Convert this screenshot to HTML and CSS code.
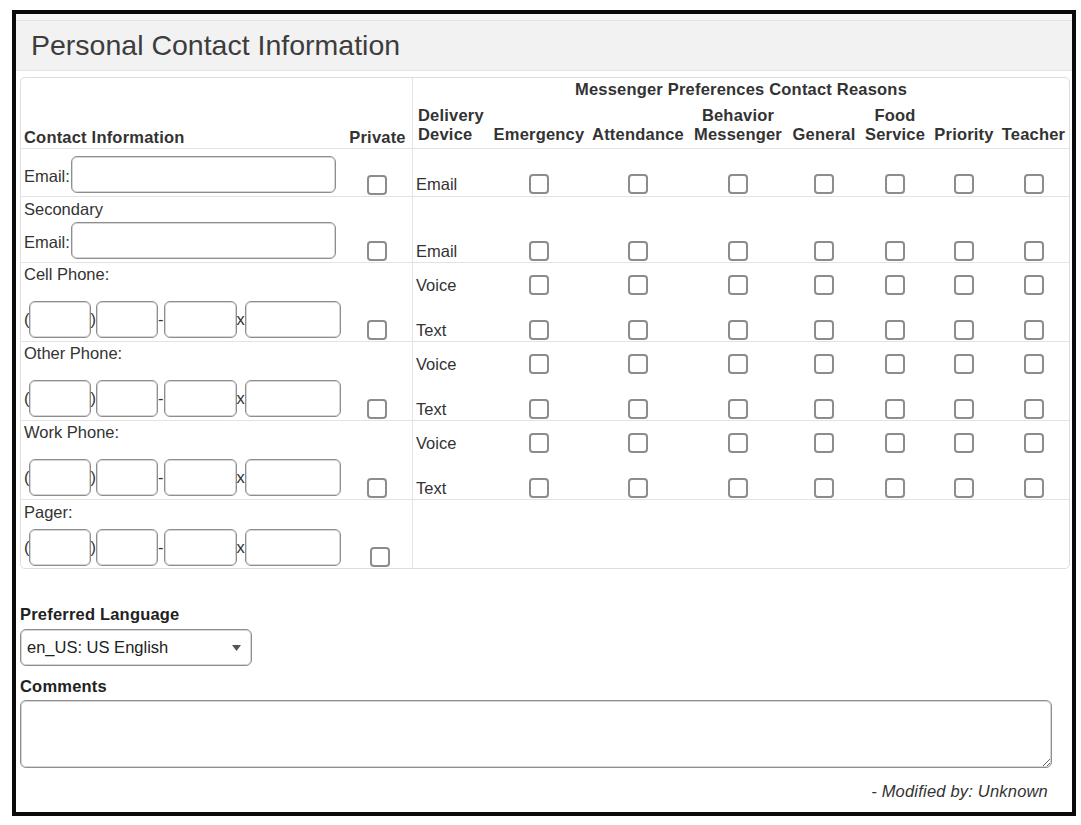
FILE: index.html
```html
<!DOCTYPE html>
<html lang="en">
<head>
<meta charset="utf-8">
<title>Personal Contact Information</title>
<link rel="stylesheet" href="styles.css">
</head>
<body>
<div class="frame">
  <div class="hdr"><h2 class="title">Personal Contact Information</h2></div>
  <div class="body">
    <div class="grid">
      <!-- header -->
      <div class="c th hd-left span2r">Contact Information</div>
      <div class="c th hd-priv span2r">Private</div>
      <div class="c th hd-msg dl">Messenger Preferences Contact Reasons</div>
      <div class="c th hd-dev dl">Delivery<br>Device</div>
      <div class="c th hd-col">Emergency</div>
      <div class="c th hd-col">Attendance</div>
      <div class="c th hd-col">Behavior<br>Messenger</div>
      <div class="c th hd-col">General</div>
      <div class="c th hd-col">Food<br>Service</div>
      <div class="c th hd-col">Priority</div>
      <div class="c th hd-col">Teacher</div>

      <!-- Email -->
      <div class="c t left">
        <div class="field"><span class="flbl">Email:</span><input class="in in-email" type="text"></div>
      </div>
      <div class="c t ck priv"><input class="cb" type="checkbox"></div>
      <div class="c t dl dv pb2">Email</div>
      <div class="c t ck pb2"><input class="cb" type="checkbox"></div>
      <div class="c t ck pb2"><input class="cb" type="checkbox"></div>
      <div class="c t ck pb2"><input class="cb" type="checkbox"></div>
      <div class="c t ck pb2"><input class="cb" type="checkbox"></div>
      <div class="c t ck pb2"><input class="cb" type="checkbox"></div>
      <div class="c t ck pb2"><input class="cb" type="checkbox"></div>
      <div class="c t ck pb2"><input class="cb" type="checkbox"></div>

      <!-- Secondary Email -->
      <div class="c t left stack sec">
        <div>Secondary</div>
        <div class="field"><span class="flbl">Email:</span><input class="in in-email" type="text"></div>
      </div>
      <div class="c t ck priv"><input class="cb" type="checkbox"></div>
      <div class="c t dl dv">Email</div>
      <div class="c t ck"><input class="cb" type="checkbox"></div>
      <div class="c t ck"><input class="cb" type="checkbox"></div>
      <div class="c t ck"><input class="cb" type="checkbox"></div>
      <div class="c t ck"><input class="cb" type="checkbox"></div>
      <div class="c t ck"><input class="cb" type="checkbox"></div>
      <div class="c t ck"><input class="cb" type="checkbox"></div>
      <div class="c t ck"><input class="cb" type="checkbox"></div>

      <!-- Cell Phone -->
      <div class="c t left stack phone span2r">
        <div>Cell Phone:</div>
        <div class="field ph"><span class="op">(</span><input class="in p1" type="text"><span>)</span><input class="in p2" type="text"><span>-</span><input class="in p3" type="text"><span>x</span><input class="in p4" type="text"></div>
      </div>
      <div class="c t ck priv span2r"><input class="cb" type="checkbox"></div>
      <div class="c t dl dv">Voice</div>
      <div class="c t ck"><input class="cb" type="checkbox"></div>
      <div class="c t ck"><input class="cb" type="checkbox"></div>
      <div class="c t ck"><input class="cb" type="checkbox"></div>
      <div class="c t ck"><input class="cb" type="checkbox"></div>
      <div class="c t ck"><input class="cb" type="checkbox"></div>
      <div class="c t ck"><input class="cb" type="checkbox"></div>
      <div class="c t ck"><input class="cb" type="checkbox"></div>
      <div class="c dl dv">Text</div>
      <div class="c ck"><input class="cb" type="checkbox"></div>
      <div class="c ck"><input class="cb" type="checkbox"></div>
      <div class="c ck"><input class="cb" type="checkbox"></div>
      <div class="c ck"><input class="cb" type="checkbox"></div>
      <div class="c ck"><input class="cb" type="checkbox"></div>
      <div class="c ck"><input class="cb" type="checkbox"></div>
      <div class="c ck"><input class="cb" type="checkbox"></div>

      <!-- Other Phone -->
      <div class="c t left stack phone span2r">
        <div>Other Phone:</div>
        <div class="field ph"><span class="op">(</span><input class="in p1" type="text"><span>)</span><input class="in p2" type="text"><span>-</span><input class="in p3" type="text"><span>x</span><input class="in p4" type="text"></div>
      </div>
      <div class="c t ck priv span2r"><input class="cb" type="checkbox"></div>
      <div class="c t dl dv">Voice</div>
      <div class="c t ck"><input class="cb" type="checkbox"></div>
      <div class="c t ck"><input class="cb" type="checkbox"></div>
      <div class="c t ck"><input class="cb" type="checkbox"></div>
      <div class="c t ck"><input class="cb" type="checkbox"></div>
      <div class="c t ck"><input class="cb" type="checkbox"></div>
      <div class="c t ck"><input class="cb" type="checkbox"></div>
      <div class="c t ck"><input class="cb" type="checkbox"></div>
      <div class="c dl dv">Text</div>
      <div class="c ck"><input class="cb" type="checkbox"></div>
      <div class="c ck"><input class="cb" type="checkbox"></div>
      <div class="c ck"><input class="cb" type="checkbox"></div>
      <div class="c ck"><input class="cb" type="checkbox"></div>
      <div class="c ck"><input class="cb" type="checkbox"></div>
      <div class="c ck"><input class="cb" type="checkbox"></div>
      <div class="c ck"><input class="cb" type="checkbox"></div>

      <!-- Work Phone -->
      <div class="c t left stack phone span2r">
        <div>Work Phone:</div>
        <div class="field ph"><span class="op">(</span><input class="in p1" type="text"><span>)</span><input class="in p2" type="text"><span>-</span><input class="in p3" type="text"><span>x</span><input class="in p4" type="text"></div>
      </div>
      <div class="c t ck priv span2r"><input class="cb" type="checkbox"></div>
      <div class="c t dl dv">Voice</div>
      <div class="c t ck"><input class="cb" type="checkbox"></div>
      <div class="c t ck"><input class="cb" type="checkbox"></div>
      <div class="c t ck"><input class="cb" type="checkbox"></div>
      <div class="c t ck"><input class="cb" type="checkbox"></div>
      <div class="c t ck"><input class="cb" type="checkbox"></div>
      <div class="c t ck"><input class="cb" type="checkbox"></div>
      <div class="c t ck"><input class="cb" type="checkbox"></div>
      <div class="c dl dv">Text</div>
      <div class="c ck"><input class="cb" type="checkbox"></div>
      <div class="c ck"><input class="cb" type="checkbox"></div>
      <div class="c ck"><input class="cb" type="checkbox"></div>
      <div class="c ck"><input class="cb" type="checkbox"></div>
      <div class="c ck"><input class="cb" type="checkbox"></div>
      <div class="c ck"><input class="cb" type="checkbox"></div>
      <div class="c ck"><input class="cb" type="checkbox"></div>

      <!-- Pager -->
      <div class="c t left stack pager">
        <div>Pager:</div>
        <div class="field ph"><span class="op">(</span><input class="in p1" type="text"><span>)</span><input class="in p2" type="text"><span>-</span><input class="in p3" type="text"><span>x</span><input class="in p4" type="text"></div>
      </div>
      <div class="c t ck priv shift"><input class="cb" type="checkbox"></div>
      <div class="c t dl empty"></div>
    </div>

    <div class="extra">
      <div class="lbl">Preferred Language</div>
      <div class="selwrap">
        <select class="sel"><option>en_US: US English</option></select>
        <svg class="arrow" width="9" height="6" viewBox="0 0 9 6" aria-hidden="true"><path d="M0 0H9L4.5 6Z" fill="#555"/></svg>
      </div>
      <div class="lbl comments">Comments</div>
      <textarea class="ta"></textarea>
      <div class="mod">- Modified by: Unknown</div>
    </div>
  </div>
</div>
</body>
</html>
```
FILE: styles.css
```css
* { box-sizing: border-box; }

body {
  margin: 0;
  background: #fff;
  font-family: "Liberation Sans", Arial, sans-serif;
  font-size: 16.5px;
  line-height: 19px;
  color: #333;
}

.frame {
  margin: 10px 0 0 12px;
  width: 1064px;
  height: 806px;
  border: 4px solid #0a0a0a;
  background: #fff;
}

.hdr {
  background: #f7f7f7;
  padding-top: 6px;
}

.title {
  margin: 0;
  padding: 8px 15px 9px;
  background: #f2f2f2;
  border-top: 1px solid #e4e4e4;
  border-bottom: 1px solid #e4e4e4;
  font-size: 28.5px;
  line-height: 32px;
  font-weight: normal;
  color: #3d3d3d;
}

.body {
  padding: 6px 2px 0 4px;
}

.grid {
  display: grid;
  width: 1050px;
  grid-template-columns: 324px 67px 78px 98px 100px 100px 72px 70px 68px 71px;
  grid-template-rows: 22px 48px 48px 66px 34px 45px 34px 45px 34px 45px 69px;
  border: 1px solid #dedede;
  border-radius: 5px;
}

.c {
  display: flex;
  align-items: flex-end;
  min-width: 0;
  padding-bottom: 1px;
}

.t { border-top: 1px solid #e3e3e3; }
.dl { border-left: 1px solid #e3e3e3; }
.span2r { grid-row: span 2; }

.th {
  font-weight: bold;
  letter-spacing: 0.2px;
  padding-bottom: 4px;
  white-space: nowrap;
}

.hd-left { padding-left: 3px; padding-bottom: 1px; }
.hd-priv { justify-content: center; padding-bottom: 1px; padding-right: 2px; }
.hd-msg {
  grid-column: span 8;
  align-items: flex-start;
  justify-content: center;
  padding-top: 2px;
}
.hd-dev { padding-left: 5px; }
.hd-col {
  justify-content: center;
  text-align: center;
}

.ck { justify-content: center; }
.priv { padding-right: 4px; }
.pb2 { padding-bottom: 2px; }
.dv { padding-left: 3px; }
.priv.shift { padding-right: 0; padding-left: 2px; }
.empty { grid-column: span 8; }

.left {
  padding-left: 3px;
  padding-bottom: 3px;
}

.stack {
  flex-direction: column;
  align-items: flex-start;
  justify-content: space-between;
}
.sec { padding-top: 3px; }
.phone { padding-top: 2px; }
.pager { padding-top: 3px; padding-bottom: 2px; }

.field {
  display: flex;
  align-items: flex-end;
}
.flbl { padding-bottom: 7px; }

.field.ph { align-items: center; }
.op { margin-right: -1px; }

.in {
  height: 37px;
  margin: 0;
  padding: 0 4px;
  border: 1px solid #8e8e8e;
  box-shadow: inset 0 0 0 1px #d6d6d6;
  border-radius: 6px;
  background: #fff;
  font: inherit;
}
.in-email { width: 265px; margin-left: 1px; }
.p1 { width: 62px; }
.p2 { width: 62px; }
.p3 { width: 73px; }
.p4 { width: 96px; }

.cb {
  appearance: none;
  -webkit-appearance: none;
  display: block;
  width: 20px;
  height: 20px;
  margin: 0;
  border: 2px solid #8c8c8c;
  border-radius: 4px;
  background: #fff;
}

.extra {
  width: 1032px;
  padding-top: 36px;
}

.lbl {
  font-weight: bold;
  letter-spacing: 0.2px;
  color: #222;
}

.selwrap {
  position: relative;
  width: 232px;
  margin-top: 5px;
}

.sel {
  appearance: none;
  -webkit-appearance: none;
  display: block;
  width: 232px;
  height: 37px;
  margin: 0;
  padding: 0 0 0 6px;
  border: 1px solid #8e8e8e;
  box-shadow: inset 0 0 0 1px #d6d6d6;
  border-radius: 6px;
  background: #fff;
  font: inherit;
  color: #222;
}

.arrow {
  position: absolute;
  right: 11px;
  top: 16px;
}

.comments { margin-top: 11px; }

.ta {
  display: block;
  width: 1032px;
  height: 68px;
  margin: 4px 0 0;
  border: 1px solid #8e8e8e;
  box-shadow: inset 0 0 0 1px #d6d6d6;
  border-radius: 6px;
  font: inherit;
}

.mod {
  margin-top: 14px;
  padding-right: 4px;
  text-align: right;
  font-style: italic;
  letter-spacing: 0.2px;
}
```
